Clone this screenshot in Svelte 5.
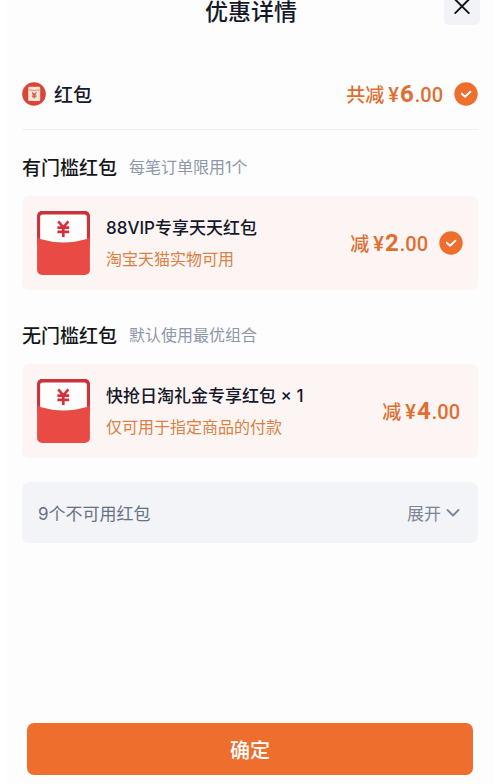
<script>
  const sections = [
    {
      title: '有门槛红包',
      hint: '每笔订单限用1个',
      name: '88VIP专享天天红包',
      note: '淘宝天猫实物可用',
      amount: '2',
      checked: true
    },
    {
      title: '无门槛红包',
      hint: '默认使用最优组合',
      name: '快抢日淘礼金专享红包 × 1',
      note: '仅可用于指定商品的付款',
      amount: '4',
      checked: false
    }
  ];
</script>

{#snippet check()}
  <svg class="check" viewBox="0 0 24 24" aria-hidden="true">
    <circle cx="12" cy="12" r="11.7" fill="#ed6e2d" />
    <path d="M7.8 11.7l3.2 3 5.4-5" fill="none" stroke="#fff" stroke-width="1.900" stroke-linecap="round" stroke-linejoin="round" />
  </svg>
{/snippet}

{#snippet price(label, amount)}
  <span class="price">
    <span class="label">{label}</span>
    <span class="yen">¥</span><span class="whole">{amount}</span><span class="cents">.00</span>
  </span>
{/snippet}

<div class="sheet">
  <header>
    <h1>优惠详情</h1>
    <button class="close" type="button" aria-label="关闭">
      <svg viewBox="0 0 16 16" aria-hidden="true">
        <path d="M1.200 -0.500l13.600 13.600M14.800 -0.500L1.200 13.100" fill="none" stroke="#10131c" stroke-width="1.900" stroke-linecap="round" />
      </svg>
    </button>
  </header>

  <main>
    <div class="total">
      <svg class="badge" viewBox="0 0 24 24" aria-hidden="true">
        <circle cx="12" cy="12" r="11.800" fill="#d9433a" />
        <rect x="6.200" y="4.800" width="12" height="14.200" rx="1.300" fill="#fbe6d3" />
        <path d="M6.200 7.900q6 1 12 0" fill="none" stroke="#d9806a" stroke-width="0.900" />
        <path d="M10 10.400l2.200 2.300 2.200-2.300M9.900 13h4.600M9.900 14.800h4.600M12.200 12.700v3.900" fill="none" stroke="#c9503f" stroke-width="1.100" />
      </svg>
      <h2>红包</h2>
      {@render price('共减', '6')}
      {@render check()}
    </div>

    {#each sections as s}
      <section>
        <div class="heading">
          <h2>{s.title}</h2>
          <span>{s.hint}</span>
        </div>
        <div class="card">
          <svg class="packet" viewBox="0 0 52 63" aria-hidden="true">
            <rect width="52" height="63" rx="5" fill="#e94a43" />
            <path d="M0 28V5a5 5 0 0 1 5-5h42a5 5 0 0 1 5 5v23z" fill="#c9333a" />
            <path d="M0 26Q26 35 52 26V34H0z" fill="#e94a43" />
            <path d="M3 6a2.500 2.500 0 0 1 2.500-2.500h41A2.500 2.500 0 0 1 49 6v21.500Q26 34.500 3 27.500z" fill="#fff" />
            <path d="M20.800 10.200l5 5.800 5-5.800M20 16.300h11.600M20 20.600h11.600M25.800 16v9.500" fill="none" stroke="#d52f3c" stroke-width="2.600" />
          </svg>
          <div class="info">
            <h3>{s.name}</h3>
            <p>{s.note}</p>
          </div>
          {@render price('减', s.amount)}
          {#if s.checked}{@render check()}{/if}
        </div>
      </section>
    {/each}

    <button class="more" type="button">
      <span>9个不可用红包</span>
      <span class="expand">
        展开
        <svg viewBox="0 0 14 8" aria-hidden="true">
          <path d="M1.500 1L7 6.500 12.500 1" fill="none" stroke="#7c8496" stroke-width="1.800" stroke-linecap="round" stroke-linejoin="round" />
        </svg>
      </span>
    </button>
  </main>

  <footer>
    <button class="confirm" type="button">确定</button>
  </footer>
</div>

<style>
  :global(body) {
    margin: 0;
    background: #fff;
  }
  .sheet {
    box-sizing: border-box;
    min-height: 100vh;
    margin: 0 7px;
    padding: 0 15px 9px;
    display: flex;
    flex-direction: column;
    background: #fdfdfd;
    color: #15182a;
    font-family: Inter, "Noto Sans CJK SC", sans-serif;
  }
  h1, h2, h3, p {
    margin: 0;
    font-weight: 500;
  }
  button {
    border: 0;
    font-family: inherit;
    cursor: pointer;
  }
  svg {
    display: block;
    flex: none;
  }
  header {
    display: grid;
    grid-template-columns: 1fr auto 1fr;
    height: 25px;
    margin-right: -2px;
  }
  h1 {
    grid-column: 2;
    font-size: 23px;
    line-height: 24px;
  }
  .close {
    justify-self: end;
    width: 36px;
    padding: 0 10px 9px;
    border-radius: 0 0 5px 5px;
    background: #f1f3f7;
  }
  .close svg {
    width: 16px;
    height: 16px;
    overflow: visible;
  }
  .total {
    display: flex;
    align-items: center;
    height: 70px;
    margin-top: 34px;
    border-bottom: 1px solid #eeeeef;
  }
  .badge {
    width: 24px;
    height: 24px;
    margin-right: 8px;
  }
  h2 {
    padding-top: 3px;
    font-size: 19px;
    line-height: 28px;
  }
  .price {
    margin-left: auto;
    padding-top: 2px;
    display: flex;
    align-items: baseline;
    color: #df6f31;
    font-family: Roboto, "Noto Sans CJK SC", sans-serif;
    font-size: 20px;
    font-weight: 500;
    line-height: 28px;
  }
  .label {
    font-size: 19px;
    margin-right: 4px;
  }
  .whole {
    margin: 0 1px;
    font-size: 24px;
    font-weight: 700;
  }
  .check {
    width: 24px;
    height: 24px;
    margin-left: 11px;
  }
  .heading {
    display: flex;
    align-items: center;
    gap: 12px;
    height: 28px;
    margin: 23px 0 15px;
    color: #15161a;
  }
  section + section .heading {
    margin-top: 31px;
  }
  .heading span {
    color: #8e97a9;
    font-size: 16px;
    line-height: 24px;
  }
  .card {
    display: flex;
    align-items: center;
    padding: 15px;
    border-radius: 7px;
    background: #fcf5f3;
  }
  .packet {
    width: 53px;
    height: 64px;
    margin-right: 16px;
  }
  .card .price {
    padding-right: 3px;
  }
  .card .check {
    margin-left: 8px;
  }
  h3 {
    font-size: 17px;
    line-height: 32px;
  }
  p {
    color: #d98245;
    font-size: 16px;
    font-weight: 400;
    line-height: 30px;
  }
  .more {
    display: flex;
    align-items: center;
    justify-content: space-between;
    width: 100%;
    height: 61px;
    margin-top: 24px;
    padding: 0 18px 0 16px;
    border-radius: 7px;
    background: #f2f4f7;
    color: #687084;
    font-size: 17px;
  }
  .expand {
    display: flex;
    align-items: center;
    gap: 5px;
    color: #7c8496;
  }
  .expand svg {
    width: 14px;
    height: 8px;
  }
  footer {
    margin-top: auto;
    padding: 24px 5px 0;
  }
  .confirm {
    display: block;
    width: 100%;
    height: 52px;
    border-radius: 7px;
    background: #ed6e2d;
    color: #fff;
    font-size: 20px;
    font-weight: 500;
  }
</style>
